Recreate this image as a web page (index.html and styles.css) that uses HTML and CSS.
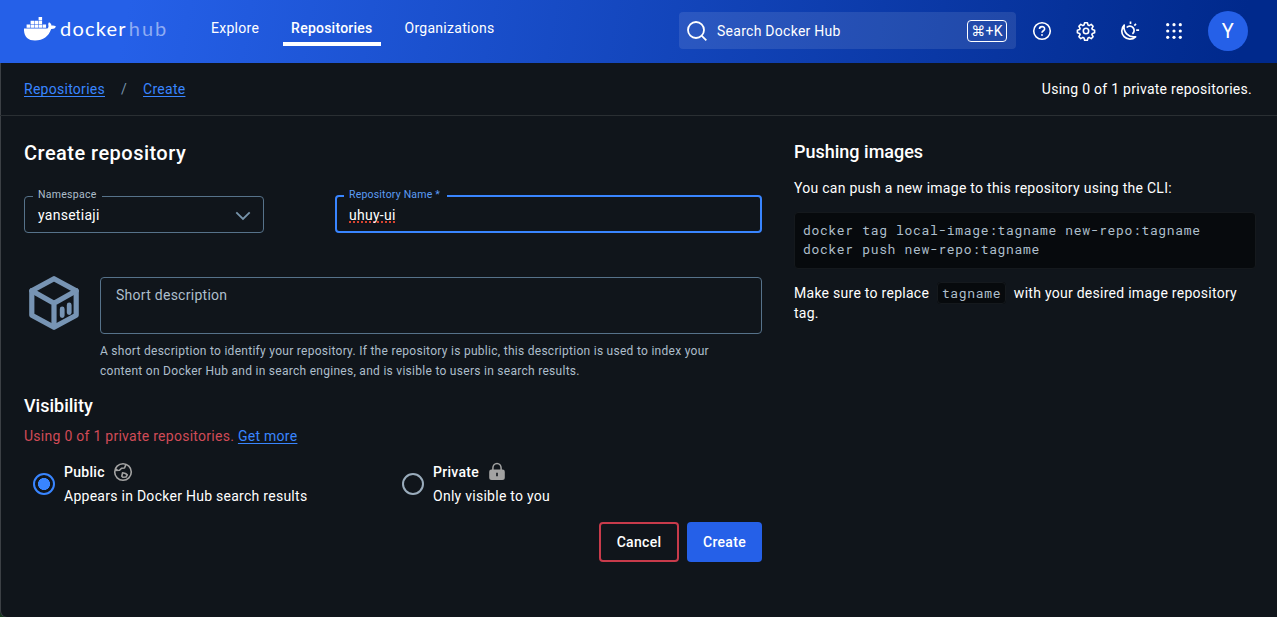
FILE: index.html
```html
<!DOCTYPE html>
<html lang="en">
<head>
<meta charset="utf-8">
<title>Create repository | Docker Hub</title>
<link rel="stylesheet" href="styles.css">
</head>
<body>
<div class="app">
  <header class="topbar">
    <a class="logo">
      <svg class="whale" viewBox="0 0 32 24" width="32" height="24">
        <g fill="#fff">
          <path d="M0 11.5H23.2C24.4 11 24.6 9.6 24.4 8.4C24.1 7.2 24.2 6.2 25 5.2C26.6 6 27.5 7.2 27.6 8.7C29.2 8.4 30.8 8.7 32 9.6C31.2 11.4 29.6 12.2 27.2 12.1C24.6 19.4 19.4 23.6 11 23.6C3.6 23.6-.4 19.4 0 11.5Z"/>
          <path d="M2.6 7.6h3.5v3.2H2.6zM6.6 7.6h3.5v3.2H6.6zM10.6 7.6h3.5v3.2h-3.5zM14.6 7.6h3.5v3.2h-3.5zM18.6 7.6h3.5v3.2h-3.5zM6.6 3.8h3.5V7H6.6zM10.6 3.8h3.5V7h-3.5zM14.6 3.8h3.5V7h-3.5zM14.6 0h3.5v3.2h-3.5z"/>
        </g>
      </svg>
      <span class="word">docker</span><span class="word hub">hub</span>
    </a>
    <nav class="nav">
      <a>Explore</a>
      <a class="active">Repositories</a>
      <a>Organizations</a>
    </nav>
    <div class="search">
      <svg width="20" height="20" viewBox="0 0 20 20" fill="none" stroke="#fff" stroke-width="1.8"><circle cx="9" cy="9" r="8"/><path d="M14.8 14.8L19.3 19.3"/></svg>
      <span class="search-text">Search Docker Hub</span>
      <kbd>⌘+K</kbd>
    </div>
    <div class="tools">
      <svg width="20" height="20" viewBox="0 0 20 20" fill="none" stroke="#fff" stroke-width="1.6"><circle cx="10" cy="10" r="8.3"/><path d="M7.5 8C7.5 4.9 12.6 4.9 12.6 7.9C12.6 9.8 10 9.7 10 11.8"/><circle cx="10" cy="14" r=".9" fill="#fff" stroke="none"/></svg>
      <svg width="20" height="20" viewBox="0 0 20 20" fill="none" stroke="#fff" stroke-width="1.6" stroke-linejoin="round"><circle cx="10" cy="10" r="2.7"/><path d="M8.6 1.8h2.8l.6 2.3 1.1.5 2.1-1.2 1.9 1.9-1.2 2.1.5 1.2 2.2.6v2.6l-2.2.6-.5 1.2 1.2 2.1-1.9 1.9-2.1-1.2-1.1.5-.6 2.3H8.6L8 16.9l-1.1-.5-2.1 1.2-1.9-1.9 1.2-2.1-.5-1.2-2.2-.6V9.2l2.2-.6.5-1.2-1.2-2.1 1.9-1.9 2.1 1.2L8 4.1z"/></svg>
      <svg width="20" height="20" viewBox="0 0 20 20" fill="none" stroke="#fff" stroke-width="1.7" stroke-linejoin="round"><path d="M4.2 4.2A8 8 0 1 0 15.6 15.8C9 16.900 2.900 11.500 4.200 4.200Z"/><path d="M6.700 6.500A4.300 4.300 0 1 1 12.400 12.900"/><path d="M10.500 3V.500M14.300 4.600L16 2.900M16.200 9.200h2.900"/></svg>
      <svg width="20" height="20" viewBox="0 0 20 20" fill="#fff"><circle cx="3.7" cy="3.7" r="1.6"/><circle cx="10" cy="3.7" r="1.6"/><circle cx="16.3" cy="3.7" r="1.6"/><circle cx="3.7" cy="10" r="1.6"/><circle cx="10" cy="10" r="1.6"/><circle cx="16.3" cy="10" r="1.6"/><circle cx="3.7" cy="16.3" r="1.6"/><circle cx="10" cy="16.3" r="1.6"/><circle cx="16.3" cy="16.3" r="1.6"/></svg>
    </div>
    <div class="avatar">Y</div>
  </header>

  <div class="crumbs">
    <a class="link">Repositories</a><span class="slash">/</span><a class="link">Create</a>
    <span class="quota">Using 0 of 1 private repositories.</span>
  </div>

  <main class="page">
    <section class="form">
      <h1>Create repository</h1>
      <div class="fields">
        <fieldset class="field namespace">
          <legend>Namespace</legend>
          <span class="value">yansetiaji</span>
          <svg width="16" height="10" viewBox="0 0 16 10" fill="none" stroke="#7794ab" stroke-width="1.8"><path d="M1.3 1.3L8 8L14.7 1.3"/></svg>
        </fieldset>
        <fieldset class="field repo">
          <legend>Repository Name *</legend>
          <span class="value misspelt">uhuy-ui</span>
        </fieldset>
      </div>
      <div class="description">
        <svg class="cube" width="52" height="56" viewBox="0 0 52 56" fill="none" stroke="#7794b4" stroke-width="5.2" stroke-linejoin="round" stroke-linecap="round"><path d="M26 3.7L48.2 15.7V40.3L26 52.3L3.8 40.3V15.7Z"/><path d="M3.8 15.7L26 28.3L48.2 15.7M26 28.3V51"/><path d="M34.2 34V40.5M41.2 30V37.5" stroke-width="4.8"/></svg>
        <div class="desc-main">
          <div class="textarea">Short description</div>
          <p class="hint">A short description to identify your repository. If the repository is public, this description is used to index your content on Docker Hub and in search engines, and is visible to users in search results.</p>
        </div>
      </div>
      <h2>Visibility</h2>
      <p class="limit">Using 0 of 1 private repositories. <a class="link">Get more</a></p>
      <div class="choices">
        <label class="choice">
          <span class="radio on"></span>
          <span class="choice-text">
            <span class="name">Public
              <svg width="20" height="20" viewBox="0 0 20 20" fill="none" stroke="#a3a3a3" stroke-width="1.6" stroke-linejoin="round"><circle cx="10" cy="10" r="8.3"/><path d="M2 8.5L6.5 8.3L8.6 6.2L11.5 6L13 2.4M2.5 7L5.2 8.6M8.8 14.3L9.6 10.8L12.5 11.5L14.3 12.8L13 15L9.8 15.3Z"/></svg>
            </span>
            <span>Appears in Docker Hub search results</span>
          </span>
        </label>
        <label class="choice">
          <span class="radio"></span>
          <span class="choice-text">
            <span class="name">Private
              <svg width="20" height="20" viewBox="0 0 20 20"><path d="M5.9 8V6A4.1 4.6 0 0 1 14.1 6V8" fill="none" stroke="#a3a3a3" stroke-width="1.5"/><path fill="#a3a3a3" fill-rule="evenodd" d="M4.5 7.5h11q2.3 0 2.3 2.3v5.7q0 2.5-2.5 2.5H4.7q-2.5 0-2.5-2.5V9.8q0-2.3 2.3-2.3zM9.2 10.8v3.4h1.6v-3.4z"/></svg>
            </span>
            <span>Only visible to you</span>
          </span>
        </label>
      </div>
      <div class="actions">
        <button class="btn cancel">Cancel</button>
        <button class="btn create">Create</button>
      </div>
    </section>

    <aside class="side">
      <h2>Pushing images</h2>
      <p>You can push a new image to this repository using the CLI:</p>
      <pre>docker tag local-image:tagname new-repo:tagname
docker push new-repo:tagname</pre>
      <p>Make sure to replace <code>tagname</code> with your desired image repository tag.</p>
    </aside>
  </main>
</div>
</body>
</html>
```
FILE: styles.css
```css
* { box-sizing: border-box; }
html { background: #163a1c; }
body {
  margin: 0;
  font: 400 14px/20px Roboto, sans-serif;
  letter-spacing: 0.27px;
  color: #fff;
}
h1, h2, p, pre, fieldset { margin: 0; }
.app {
  height: 617px;
  background: #10151b;
  border-bottom-left-radius: 6px;
  box-shadow: inset 1px 0 #3c4045;
  overflow: hidden;
}
.link { color: #3985ff; text-decoration: underline; text-underline-offset: 2px; text-decoration-skip-ink: none; }

/* Top bar */
.topbar {
  display: flex;
  align-items: center;
  height: 63px;
  padding: 0 29px 2px 24px;
  background: linear-gradient(100deg, #2560e8 10%, #00298c 97%);
}
.logo {
  display: flex;
  align-items: center;
  width: 179px;
  height: 24px;
  margin-bottom: 3px;
}
.whale { margin-right: 4px; }
.word { font: 400 20px/24px Lato, sans-serif; letter-spacing: 1.2px; margin-top: -2px; }
.hub { margin-left: 2px; color: #8facf3; letter-spacing: 2px; }
.nav { display: flex; gap: 16px; height: 34px; margin-bottom: 1px; }
.nav a { height: 33px; padding: 5px 8px 0; letter-spacing: .27px; }
.nav .active { font-weight: 500; letter-spacing: .24px; border-bottom: 4px solid #fff; }
.search {
  display: flex;
  align-items: center;
  width: 337px;
  height: 37px;
  margin-left: auto;
  padding: 0 9px 0 8px;
  border-radius: 4px;
  background: rgba(255, 255, 255, .1);
}
.search-text { margin-left: 10px; }
kbd {
  margin-left: auto;
  width: 40px;
  font: 14px/20px Roboto, "DejaVu Sans", sans-serif;
  text-align: center;
  border: 1px solid #fff;
  border-radius: 4px;
}
.tools { display: flex; gap: 24px; margin-left: 16px; }
.avatar {
  width: 40px;
  height: 40px;
  margin-left: 24px;
  border-radius: 50%;
  background: #2560e8;
  font-size: 20px;
  line-height: 40px;
  text-align: center;
}

/* Breadcrumbs */
.crumbs {
  display: flex;
  align-items: center;
  height: 53px;
  padding: 0 25px 0 24px;
  border-bottom: 1px solid #2a2f33;
}
.slash { margin: 0 16px; color: #7794ab; }
.quota { margin-left: auto; }

/* Page */
.page { display: flex; gap: 32px; padding: 24px 21px 0 24px; }
.form { width: 738px; flex: none; }
h1 { font-size: 20px; line-height: 26px; font-weight: 500; letter-spacing: .47px; }
h2 { font-size: 18px; line-height: 24px; font-weight: 500; letter-spacing: 0; }
.fields { display: flex; gap: 71px; height: 46px; margin-top: 21px; }
.field {
  display: flex;
  align-items: center;
  height: 46px;
  min-width: 0;
  padding: 0 12px 4px 13px;
  border: 1px solid #56728a;
  border-radius: 4px;
}
.field legend {
  height: 17px;
  margin-left: -5px;
  padding: 0 5px;
  font-size: 10.5px;
  line-height: 15px;
  color: #adbecb;
}
.value { position: relative; top: -1px; }
.namespace { width: 240px; height: 45px; margin-top: 1px; padding-bottom: 6px; justify-content: space-between; }
.namespace legend { line-height: 13px; }
.repo { width: 427px; padding: 0 12px 4px; border: 2px solid #3985ff; }
.repo legend { padding-right: 7px; color: #5c9cf5; letter-spacing: .2px; }
.misspelt { text-decoration: underline dotted #d8432f 2px; text-underline-offset: 2px; text-decoration-skip-ink: none; }
.description { display: flex; margin-top: 44px; }
.cube { flex: none; margin: -2px 20px 0 4px; }
.desc-main { flex: 1; }
.textarea {
  height: 57px;
  padding: 7px 15px;
  border: 1px solid #56728a;
  border-radius: 4px;
  color: #adbecb;
}
.hint { margin-top: 7px; padding-right: 30px; font-size: 12px; letter-spacing: .28px; color: #adbecb; }
.form h2 { margin-top: 13px; }
.limit { margin-top: 8px; color: #d14b57; }
.choices { display: grid; grid-template-columns: 369px 369px; margin-top: 14px; }
.choice { display: flex; align-items: center; height: 48px; padding-left: 9px; }
.radio { width: 22px; height: 22px; margin-right: 9px; border: 2px solid #9aacbc; border-radius: 50%; }
.radio.on { border-color: #3985ff; background: radial-gradient(circle, #3985ff 5.7px, transparent 6.3px); }
.choice-text { display: flex; flex-direction: column; gap: 4px; }
.name { display: flex; align-items: center; gap: 8px; font-weight: 500; letter-spacing: .3px; }
.actions { display: flex; justify-content: flex-end; gap: 8px; margin-top: 14px; }
.btn {
  height: 40px;
  border: 0;
  border-radius: 4px;
  font: 500 14px/20px Roboto, sans-serif;
  letter-spacing: .3px;
  color: #fff;
}
.cancel { width: 80px; background: transparent; border: 2px solid #c83b4b; }
.create { width: 75px; background: #2560e8; }

/* Side panel */
.side { width: 462px; }
.side p { margin-top: 14px; }
pre, code {
  font-family: "Roboto Mono", "DejaVu Sans Mono", monospace;
  font-size: 13px;
  letter-spacing: .66px;
  color: #adbecb;
  background: #070a0d;
  border: 1px solid #15191d;
  border-radius: 4px;
}
pre { height: 57px; margin-top: 14px; padding: 8px; line-height: 19px; }
code { margin: 0 4px; padding: 1px 4px; }
```
